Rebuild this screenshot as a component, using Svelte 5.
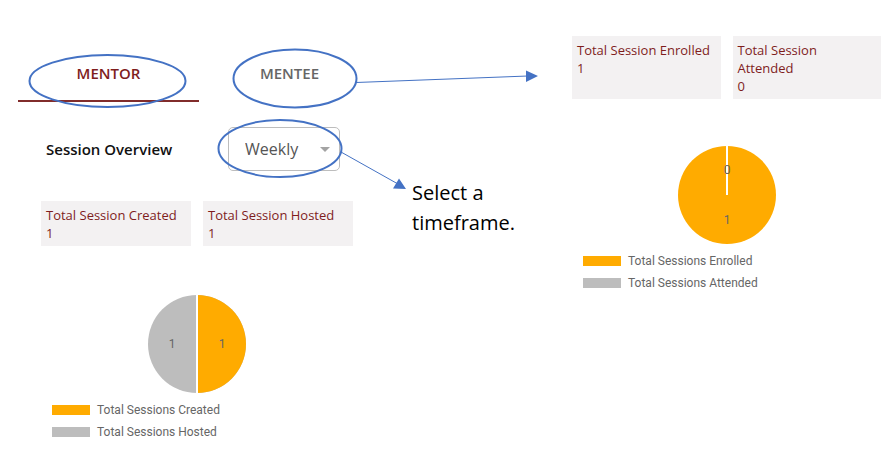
<script>
  const mentorStats = [
    { label: 'Total Session Created', value: 1 },
    { label: 'Total Session Hosted', value: 1 }
  ];
  const menteeStats = [
    { label: 'Total Session Enrolled', value: 1 },
    { label: 'Total Session Attended', value: 0 }
  ];
  let tab = $state('mentor');
  let timeframe = $state('Weekly');
</script>

{#snippet stats(items)}
  <div class="stats">
    {#each items as item}
      <div class="stat">
        <div>{item.label}</div>
        <div>{item.value}</div>
      </div>
    {/each}
  </div>
{/snippet}

{#snippet legend(first, second)}
  <ul class="legend">
    <li><span class="swatch orange"></span>{first}</li>
    <li><span class="swatch grey"></span>{second}</li>
  </ul>
{/snippet}

<main class="page">
  <section class="mentor">
    <div class="tabs" role="tablist">
      <button role="tab" aria-selected={tab === 'mentor'} class:active={tab === 'mentor'} onclick={() => (tab = 'mentor')}>MENTOR</button>
      <button role="tab" aria-selected={tab === 'mentee'} class:active={tab === 'mentee'} onclick={() => (tab = 'mentee')}>MENTEE</button>
    </div>
    <div class="overview">
      <label for="timeframe">Session Overview</label>
      <div class="picker">
        <select id="timeframe" bind:value={timeframe}>
          <option>Weekly</option>
          <option>Monthly</option>
          <option>Yearly</option>
        </select>
        <svg class="caret" width="10" height="5" viewBox="0 0 10 5" aria-hidden="true"><path d="M0 0h10L5 5z" fill="#a3a3a3" /></svg>
      </div>
    </div>
    <div class="report">
      {@render stats(mentorStats)}
      <svg class="pie" width="100" height="100" viewBox="0 0 100 100" role="img" aria-label="Sessions created and hosted">
        <circle cx="50" cy="50" r="49" fill="#bdbdbd" />
        <path d="M50 1a49 49 0 0 1 0 98z" fill="#ffab00" />
        <path d="M50 0v100" stroke="#fff" stroke-width="2" />
        <text x="25" y="54">1</text>
        <text x="75" y="54">1</text>
      </svg>
      {@render legend('Total Sessions Created', 'Total Sessions Hosted')}
    </div>
  </section>

  <p class="note">Select a timeframe.</p>

  <section class="mentee">
    {@render stats(menteeStats)}
    <svg class="pie" width="100" height="100" viewBox="0 0 100 100" role="img" aria-label="Sessions enrolled and attended">
      <circle cx="50" cy="50" r="49" fill="#ffab00" />
      <path d="M50 0v50" stroke="#fff" stroke-width="2" />
      <text x="50" y="29">0</text>
      <text x="50" y="79">1</text>
    </svg>
    {@render legend('Total Sessions Enrolled', 'Total Sessions Attended')}
  </section>

  <svg class="callouts" viewBox="0 0 894 470" preserveAspectRatio="none" aria-hidden="true">
    <g fill="none" stroke="#4472c4" stroke-width="2">
      <ellipse cx="107.500" cy="81" rx="78" ry="26" />
      <ellipse cx="295" cy="78.500" rx="61.500" ry="29" />
      <ellipse cx="280" cy="148.500" rx="61.500" ry="28.500" />
    </g>
    <path d="M356 82.500L528 76M341 152L398 184" fill="none" stroke="#4472c4" stroke-width="1" />
    <path d="M538 76L526 70.500V82zM406 189L399 178.500L393 188.500z" fill="#4472c4" />
  </svg>
</main>

<style>
  :global(body) {
    margin: 0;
    background: #fff;
  }
  .page {
    position: relative;
    display: grid;
    grid-template-columns: 362fr 192fr 309fr;
    padding: 36px 13px 28px 18px;
    font-family: 'Open Sans', 'Noto Sans', sans-serif;
  }
  .mentor {
    padding-top: 10px;
  }
  .tabs {
    display: grid;
    grid-template-columns: 1fr 1fr;
  }
  .tabs button {
    height: 56px;
    padding: 0;
    border: 0;
    border-bottom: 2px solid transparent;
    background: none;
    color: #666;
    font: 600 15px 'Open Sans', sans-serif;
  }
  .tabs button.active {
    color: #7f1d1d;
    border-color: #812c2b;
  }
  .overview {
    display: flex;
    align-items: center;
    justify-content: space-between;
    margin-top: 25px;
    padding: 0 40px 0 28px;
  }
  .overview label {
    font-size: 15px;
    font-weight: 600;
    color: #111;
  }
  .picker {
    position: relative;
    width: 112px;
  }
  select {
    appearance: none;
    display: block;
    width: 100%;
    height: 44px;
    padding: 0 16px;
    border: 1px solid #bdbdbd;
    border-radius: 5px;
    background: #fff;
    color: #555;
    font: 16px 'Open Sans', sans-serif;
  }
  .caret {
    position: absolute;
    right: 10px;
    top: 20px;
    pointer-events: none;
  }
  .report {
    margin-top: 30px;
    padding: 0 27px 0 23px;
  }
  .stats {
    display: grid;
    grid-template-columns: 1fr 1fr;
    gap: 12px;
  }
  .stat {
    padding: 5px 5px 4px;
    background: #f3f1f2;
    color: #7f1d1d;
    font-size: 13px;
    line-height: 18px;
  }
  .pie {
    display: block;
    margin: 46px auto 0;
  }
  .report .pie {
    margin-top: 48px;
  }
  .pie text {
    font: 12px Roboto, sans-serif;
    fill: #666;
    text-anchor: middle;
  }
  .legend {
    margin: 5px 0 0;
    padding: 0 0 0 11px;
    list-style: none;
    font: 12px/22px Roboto, sans-serif;
    color: #666;
  }
  .legend li {
    display: flex;
    align-items: center;
    gap: 7px;
  }
  .swatch {
    width: 38px;
    height: 10px;
  }
  .orange {
    background: #ffab00;
  }
  .grey {
    background: #bdbdbd;
  }
  .note {
    margin: 142px 0 0 32px;
    max-width: 120px;
    font-size: 20px;
    line-height: 30px;
    color: #000;
  }
  .callouts {
    position: absolute;
    inset: 0;
    width: 100%;
    height: 470px;
    pointer-events: none;
  }
</style>
